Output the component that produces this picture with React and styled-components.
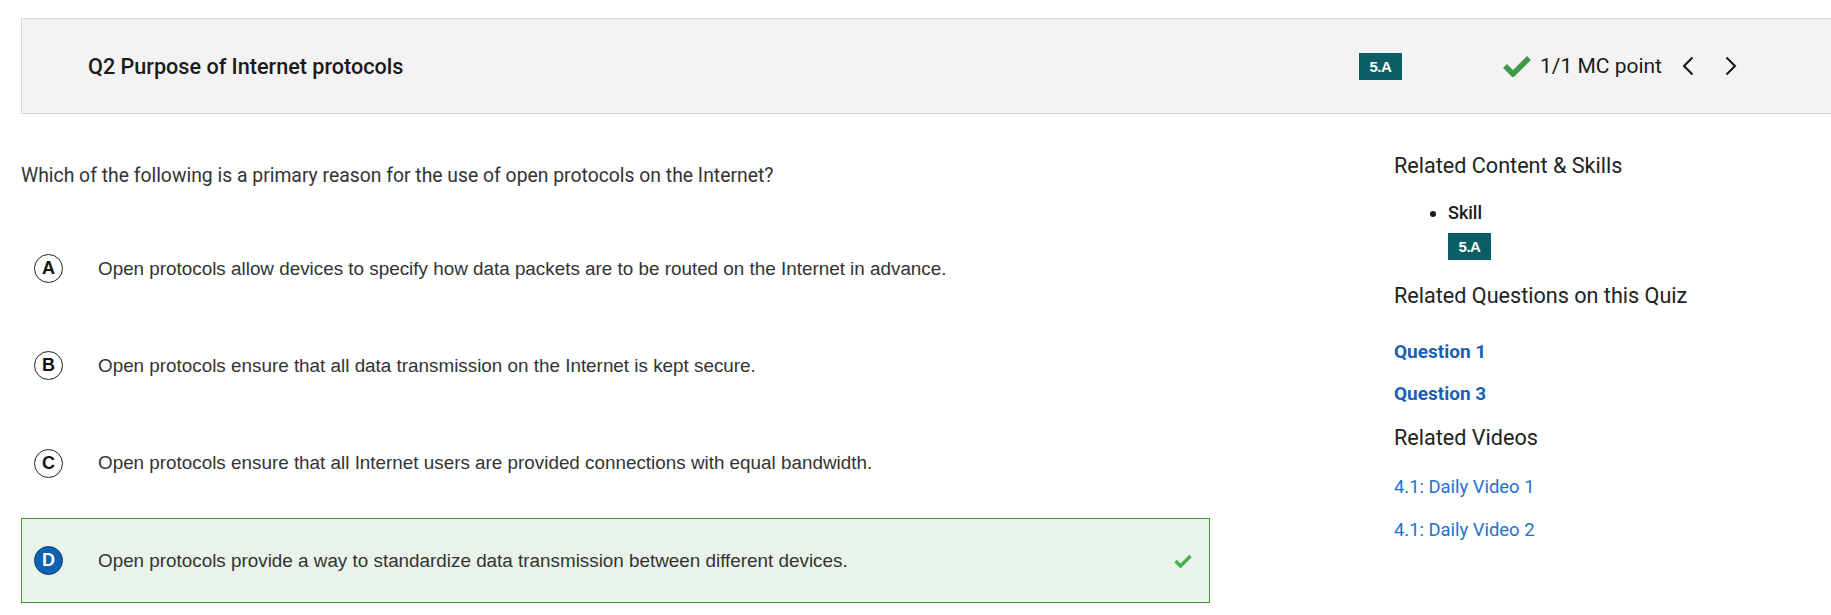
import React from 'react';
import styled, { createGlobalStyle } from 'styled-components';

const GlobalStyle = createGlobalStyle`
    body {
        margin: 0;
        background: #ffffff;
        font-family: Roboto, 'Liberation Sans', sans-serif;
        color: #222222;
    }
`;

const Page = styled.div`
    padding: 18px 0 0 21px;
`;

const Header = styled.div`
    display: flex;
    align-items: center;
    height: 94px;
    background: #f3f3f3;
    border: 1px solid #d6d6d6;
    border-right: none;
    padding: 0 94px 0 66px;
`;

const Title = styled.div`
    flex: 1;
    font-size: 21.6px;
    font-weight: 500;
    color: #1b1b1b;
`;

const Badge = styled.span`
    display: inline-flex;
    align-items: center;
    justify-content: center;
    width: 43px;
    height: 27px;
    background: #0b5d66;
    color: #ffffff;
    font-family: 'Liberation Sans', Arial, sans-serif;
    font-weight: 700;
    font-size: 15px;
    letter-spacing: -0.5px;
    margin-right: ${(p) => p.$gap || 0}px;
`;

const Points = styled.div`
    display: flex;
    align-items: center;
    gap: 9px;
    font-size: 21px;
    color: #1b1b1b;
`;

const Nav = styled.div`
    display: flex;
    align-items: center;
    gap: 31px;
    margin-left: 20px;
`;

const Body = styled.div`
    display: flex;
    gap: 184px;
`;

const Main = styled.div`
    width: 1189px;
    flex-shrink: 0;
`;

const Question = styled.p`
    margin: 50px 0 38px;
    font-size: 19.35px;
    line-height: 24px;
    color: #333333;
`;

const Options = styled.div`
    display: flex;
    flex-direction: column;
    gap: 12.4px;
`;

const Option = styled.div`
    display: flex;
    align-items: center;
    height: 85px;
    box-sizing: border-box;
    padding: 0 17px 0 12px;
    border: 1px solid ${(p) => (p.$correct ? '#3c9a3c' : 'transparent')};
    background: ${(p) => (p.$correct ? '#e9f3e9' : 'transparent')};
`;

const Letter = styled.span`
    display: inline-flex;
    align-items: center;
    justify-content: center;
    width: 29px;
    height: 29px;
    box-sizing: border-box;
    border-radius: 50%;
    border: 1.5px solid ${(p) => (p.$correct ? '#0a3f78' : '#222222')};
    background: ${(p) => (p.$correct ? '#0d62b3' : '#ffffff')};
    color: ${(p) => (p.$correct ? '#ffffff' : '#111111')};
    font-family: 'Liberation Sans', Arial, sans-serif;
    font-weight: 700;
    font-size: 18px;
    flex-shrink: 0;
`;

const OptionText = styled.span`
    flex: 1;
    margin-left: 35px;
    font-family: 'Liberation Sans', Arial, sans-serif;
    font-size: 18.85px;
    color: #333333;
`;

const Sidebar = styled.div`
    flex: 1;
    padding-top: 38px;
`;

const SideHeading = styled.h3`
    margin: ${(p) => p.$top || 0}px 0 0;
    font-size: 21.6px;
    font-weight: 400;
    line-height: 28px;
    color: #222222;
`;

const SkillList = styled.ul`
    margin: 21px 0 0;
    padding-left: 54px;
    font-size: 18px;
    font-weight: 500;
    line-height: 24px;
    color: #1b1b1b;
`;

const SkillBadgeRow = styled.div`
    margin-top: 8px;
`;

const QuestionLink = styled.a`
    display: block;
    margin-top: ${(p) => p.$top}px;
    font-size: 19px;
    font-weight: 700;
    line-height: 24px;
    color: #1a5fb4;
    text-decoration: none;
`;

const VideoLink = styled.a`
    display: block;
    margin-top: ${(p) => p.$top}px;
    font-size: 18.4px;
    line-height: 24px;
    color: #2072d1;
    text-decoration: none;
`;

const BigCheck = () => (
    <svg width="28" height="22" viewBox="0 0 28 22">
        <polyline points="2,11 10,19 26,3" fill="none" stroke="#3f9a47" strokeWidth="5.5" />
    </svg>
);

const SmallCheck = () => (
    <svg width="18" height="14" viewBox="0 0 18 14">
        <polyline points="1.5,7 6.5,12 16.5,2" fill="none" stroke="#4cae4c" strokeWidth="3.5" />
    </svg>
);

const Chevron = ({ dir }) => (
    <svg width="12" height="20" viewBox="0 0 12 20">
        <polyline
            points={dir === 'left' ? '10.5,1.5 2,10 10.5,18.5' : '1.5,1.5 10,10 1.5,18.5'}
            fill="none"
            stroke="#111111"
            strokeWidth="2"
        />
    </svg>
);

const options = [
    { key: 'A', text: 'Open protocols allow devices to specify how data packets are to be routed on the Internet in advance.' },
    { key: 'B', text: 'Open protocols ensure that all data transmission on the Internet is kept secure.' },
    { key: 'C', text: 'Open protocols ensure that all Internet users are provided connections with equal bandwidth.' },
    { key: 'D', text: 'Open protocols provide a way to standardize data transmission between different devices.', correct: true },
];

const App = () => (
    <Page>
        <GlobalStyle />
        <Header>
            <Title>Q2 Purpose of Internet protocols</Title>
            <Badge $gap={101}>5.A</Badge>
            <Points>
                <BigCheck />
                <span>1/1 MC point</span>
            </Points>
            <Nav>
                <Chevron dir="left" />
                <Chevron dir="right" />
            </Nav>
        </Header>
        <Body>
            <Main>
                <Question>Which of the following is a primary reason for the use of open protocols on the Internet?</Question>
                <Options>
                    {options.map((o) => (
                        <Option key={o.key} $correct={o.correct}>
                            <Letter $correct={o.correct}>{o.key}</Letter>
                            <OptionText>{o.text}</OptionText>
                            {o.correct && <SmallCheck />}
                        </Option>
                    ))}
                </Options>
            </Main>
            <Sidebar>
                <SideHeading>Related Content &amp; Skills</SideHeading>
                <SkillList>
                    <li>
                        Skill
                        <SkillBadgeRow>
                            <Badge>5.A</Badge>
                        </SkillBadgeRow>
                    </li>
                </SkillList>
                <SideHeading $top={22}>Related Questions on this Quiz</SideHeading>
                <QuestionLink $top={29.5} href="#">Question 1</QuestionLink>
                <QuestionLink $top={18} href="#">Question 3</QuestionLink>
                <SideHeading $top={18.5}>Related Videos</SideHeading>
                <VideoLink $top={23} href="#">4.1: Daily Video 1</VideoLink>
                <VideoLink $top={19} href="#">4.1: Daily Video 2</VideoLink>
            </Sidebar>
        </Body>
    </Page>
);

export default App;
